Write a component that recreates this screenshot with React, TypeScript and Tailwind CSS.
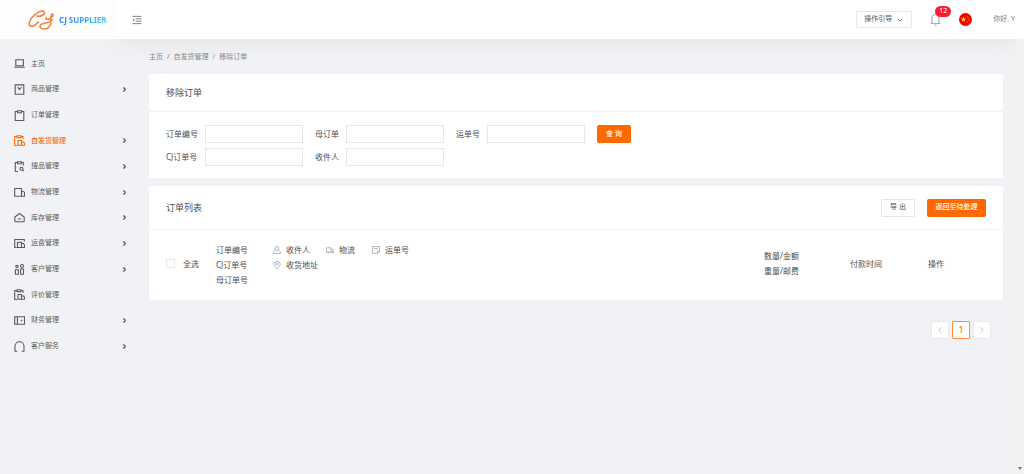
import { type ReactNode } from "react";
import { ChevronDown, ChevronLeft, ChevronRight } from "lucide-react";

type MenuItem = {
  label: string;
  icon: ReactNode;
  expandable?: boolean;
  active?: boolean;
};

const clipboard = (
  <>
    <path d="M3 1.5H1.2v9h8.6v-9H8" />
    <path d="M3.5.8h4v1.9h-4z" />
  </>
);

const clipboardBox = (
  <>
    <path d="M2.5 1.5H.7v9h2.5M7.500 1.500H9v2.500M3 .7h4v1.900H3z" />
    <path d="M4 5.500h3.500v4.700H4zM7.500 7h2.200l.8 1.500v1.700H7.500z" />
  </>
);

const menu: MenuItem[] = [
  { label: "主页", icon: <path d="M1.8 1.8h7.6v5.9H1.8zM.2 9.3h10.6" /> },
  { label: "商品管理", icon: <path d="M1.2.9h8.6v9.3H1.2zM3.5 3.2l2 2.2 2-2.2" />, expandable: true },
  { label: "订单管理", icon: clipboard },
  { label: "自发货管理", icon: clipboardBox, expandable: true, active: true },
  {
    label: "搜品管理",
    icon: (
      <>
        <path d="M3 1.5H1.3v9H4M7.5 1.5h1.8v3M3.5.8h3.8v1.9H3.5z" />
        <circle cx="7.5" cy="7.7" r="1.5" />
        <path d="M8.6 8.8l1 1.4" />
      </>
    ),
    expandable: true,
  },
  { label: "物流管理", icon: <path d="M.7 1.5h6.8v7.8H.7zM7.5 4.5h1.7q1.3 0 1.3 1.7v3.1h-3" />, expandable: true },
  { label: "库存管理", icon: <path d="M5.5 1.5L.8 5v4q0 .8.8.8h7.8q.8 0 .8-.8V5zM3.8 7h3.4" />, expandable: true },
  {
    label: "运费管理",
    icon: <path d="M2.7 9.5H.7v-8h9.6v2M3.5 4.2h4v5.3h-4zM7.5 5.5h1.8l1.2 1.500v2.500h-3" />,
    expandable: true,
  },
  {
    label: "客户管理",
    icon: (
      <>
        <circle cx="3" cy="2.6" r="1.2" />
        <circle cx="8" cy="2" r="1.5" />
        <path d="M1.4 5.8h3v4.4h-3zM6.6 5h2.9v5.2H6.6z" />
      </>
    ),
    expandable: true,
  },
  { label: "评价管理", icon: clipboardBox },
  { label: "财务管理", icon: <path d="M.7 1.8h9.8v7.4H.7zM3.4 1.8v7.4M7.5 4.7v1.6M6.7 5.5h1.6" />, expandable: true },
  { label: "客户服务", icon: <path d="M3.2 10.2H1V5.3a4.500 4.500 0 0 1 9 0v4.900H7.600" />, expandable: true },
];

function LineIcon({ children, className }: { children: ReactNode; className: string }) {
  return (
    <svg viewBox="0 0 11 11" fill="none" stroke="currentColor" className={className} aria-hidden="true">
      {children}
    </svg>
  );
}

function Logo() {
  return (
    <a href="#" className="z-10 flex w-[117px] items-center gap-[5px] bg-[#fdfdfd] pl-7">
      <svg viewBox="0 0 80 60" className="h-5 w-[26px] shrink-0" fill="none" stroke="#fb7a2c" strokeWidth="4.5" strokeLinecap="round" aria-hidden="true">
        <path d="M27 17C36 22 54 14 50 5C45-2 22 7 10 25C-1 42 3 52 14 49C21 47 27 42 32 36" />
        <path d="M56 22C53 32 69 29 76 18C80 10 72 9 71 18C70 34 74 50 58 56C44 60 34 54 38 46C43 38 58 43 75 30" />
      </svg>
      <span className="bg-gradient-to-r from-[#2d80f7] to-[#4cc4fb] bg-clip-text font-['Noto_Sans'] text-[8px] font-bold whitespace-nowrap text-transparent">
        CJ SUPPLIER
      </span>
    </a>
  );
}

function Header() {
  return (
    <header className="flex h-[39px] shrink-0">
      <Logo />
      <div className="flex flex-1 items-center bg-white pr-[9px] pl-[15px] shadow-[0_0_28px_rgba(30,35,45,0.07)]">
        <button type="button" aria-label="收起菜单" className="text-[#777777]">
          <LineIcon className="size-[10px]">
            <path d="M.5 1.5h10M4 4.2h6.5M4 6.8h6.5M.5 9.5h10" />
            <path d="M2.3 4L.6 5.5 2.3 7z" fill="currentColor" strokeWidth=".3" />
          </LineIcon>
        </button>
        <button type="button" className="ml-auto flex h-[17px] w-14 items-center justify-center gap-1 rounded-[1px] border border-[#e8e8e8] text-[#555555]">
          操作引导
          <ChevronDown className="size-2" />
        </button>
        <button type="button" aria-label="通知" className="relative ml-[18px] text-[#aaa9c8]">
          <svg viewBox="0 0 11 13" className="h-[13px] w-[11px]" fill="none" stroke="currentColor" strokeWidth="1.2" aria-hidden="true">
            <path d="M2 10V5a3.5 3.5 0 0 1 7 0v5M.5 10.5h10M4.5 12.2h2" />
          </svg>
          <span className="absolute -top-[7px] left-[5px] flex h-[11px] w-4 items-center justify-center rounded-full bg-[#fa1e2d] text-[7px] text-white">
            12
          </span>
        </button>
        <button type="button" aria-label="中文" className="ml-[18px]">
          <svg viewBox="0 0 26 26" className="size-[13px]" aria-hidden="true">
            <circle cx="13" cy="13" r="13" fill="#f50000" />
            <path d="M9 7l1.500 3.900 4.200.1-3.300 2.600 1.200 4.100L9 15.400l-3.600 2.300 1.200-4.100L3.300 11l4.200-.1z" fill="#ffd800" />
            <path d="M15.500 7q5 2 4.500 6t-5 6" fill="none" stroke="#ffa000" strokeWidth="1.800" strokeDasharray="2.500 1.800" />
          </svg>
        </button>
        <span className="ml-[21px] text-[#777777]">你好, Y</span>
      </div>
    </header>
  );
}

function Sidebar() {
  return (
    <nav className="w-[133px] shrink-0 pt-3">
      <ul className="grid h-[308px] grid-rows-12">
        {menu.map((item) => (
          <li key={item.label} className="flex">
            <a
              href="#"
              className={`flex flex-1 items-center gap-[6px] pr-[5px] pl-[14px] ${item.active ? "font-medium text-[#ff6a00]" : "text-[#5a5a5a]"}`}
            >
              <LineIcon className="size-[11px] stroke-[1.1]">{item.icon}</LineIcon>
              {item.label}
              {item.expandable && <ChevronRight className="ml-auto size-[7px] text-[#555555]" strokeWidth={4} />}
            </a>
          </li>
        ))}
      </ul>
    </nav>
  );
}

function Field({ id, label, wide }: { id: string; label: string; wide?: boolean }) {
  return (
    <div className="flex items-center">
      <label htmlFor={id} className={wide ? "w-[39px]" : "w-[31px]"}>
        {label}
      </label>
      <input id={id} type="text" className="h-[18px] w-[98px] border border-[#e6e6e6] bg-white px-1 outline-none" />
    </div>
  );
}

function SearchCard() {
  return (
    <section className="bg-white">
      <h2 className="flex h-[38px] items-center border-b border-[#f2f2f2] px-[17px] text-[9px]">移除订单</h2>
      <form className="flex flex-col gap-[5px] px-[17px] pt-[13px] pb-3 text-[8px]">
        <div className="flex gap-3">
          <Field id="orderNo" label="订单编号" wide />
          <Field id="parentOrder" label="母订单" />
          <Field id="trackingNo" label="运单号" />
          <button type="button" className="h-[18px] w-[34px] rounded-[2px] bg-[#ff6a00] text-[7px] font-medium text-white">
            查 询
          </button>
        </div>
        <div className="flex gap-3">
          <Field id="cjOrderNo" label="CJ订单号" wide />
          <Field id="recipient" label="收件人" />
        </div>
      </form>
    </section>
  );
}

function HeadLabel({ label, children }: { label: string; children: ReactNode }) {
  return (
    <span className="flex items-center gap-[5px]">
      <LineIcon className="size-[8px] text-[#999999]">{children}</LineIcon>
      {label}
    </span>
  );
}

function OrderCard() {
  return (
    <section className="mt-2 bg-white">
      <div className="flex h-[44px] items-center border-b border-[#f2f2f2] px-[17px]">
        <h2 className="text-[9px]">订单列表</h2>
        <button type="button" className="ml-auto h-[18px] w-[34px] rounded-[1px] border border-[#e8e8e8]">
          导 出
        </button>
        <button type="button" className="ml-3 h-[18px] w-[59px] rounded-[2px] bg-[#ff6a00] font-medium text-white">
          返回至待处理
        </button>
      </div>
      <table className="w-full table-fixed text-left text-[8px] leading-[15px]">
        <thead>
          <tr className="h-[70px] [&>th]:font-normal">
            <th className="w-[67px] pb-1 pl-[17px]">
              <label className="flex items-center gap-2">
                <input type="checkbox" className="size-[9px] appearance-none border border-[#e6e6e6] bg-white" />
                全选
              </label>
            </th>
            <th className="w-[57px] pb-[2px]">
              订单编号
              <br />
              CJ订单号
              <br />
              母订单号
            </th>
            <th className="align-top">
              <div className="mt-3 grid grid-cols-[53px_46px_1fr]">
                <HeadLabel label="收件人">
                  <circle cx="5.5" cy="3.2" r="2.7" />
                  <path d="M3.7 5.3C1.6 6.4.7 8 .6 10.4h9.8C10.3 8 9.4 6.4 7.3 5.3" />
                </HeadLabel>
                <HeadLabel label="物流">
                  <path d="M2 8.5H.5V2.5H7v6H4.5M7 4.5h2.3l1.2 2v2H9.6" />
                  <circle cx="3.2" cy="8.7" r="1.1" />
                  <circle cx="8.4" cy="8.7" r="1.1" />
                </HeadLabel>
                <HeadLabel label="运单号">
                  <path d="M.7.7h9.6v6.8L7.5 10.4H.7zM7.5 10.4V7.5h2.8M3 3.5h5" />
                </HeadLabel>
                <HeadLabel label="收货地址">
                  <path d="M5.5 10.7C2.5 8 1 6.2 1 4.5a4.5 4 0 0 1 9 0c0 1.7-1.5 3.5-4.5 6.2z" />
                  <circle cx="5.5" cy="4.5" r="1.5" />
                </HeadLabel>
              </div>
            </th>
            <th className="w-[86px] pb-1">
              数量/金额
              <br />
              重量/邮费
            </th>
            <th className="w-[78px] pb-1">付款时间</th>
            <th className="w-[75px] pb-1">操作</th>
          </tr>
        </thead>
      </table>
    </section>
  );
}

function Pagination() {
  return (
    <nav aria-label="分页" className="mt-[21px] mr-[12px] flex justify-end gap-[3px]">
      <button type="button" aria-label="上一页" className="flex size-[18px] items-center justify-center rounded-[1px] border border-[#e8e8e8] bg-white text-[#bbbbbb]">
        <ChevronLeft className="size-[10px]" />
      </button>
      <button type="button" className="size-[18px] rounded-[1px] border border-[#ff8a3c] bg-white text-[8px] leading-[16px] font-medium text-[#ff6a00]">
        1
      </button>
      <button type="button" aria-label="下一页" className="flex size-[18px] items-center justify-center rounded-[1px] border border-[#e8e8e8] bg-white text-[#bbbbbb]">
        <ChevronRight className="size-[10px]" />
      </button>
    </nav>
  );
}

export default function App() {
  return (
    <div className="flex min-h-screen flex-col bg-[#f0f2f5] font-['Noto_Sans','Noto_Sans_CJK_SC',sans-serif] text-[7px] text-[#4d4d4d]">
      <Header />
      <div className="flex flex-1">
        <Sidebar />
        <main className="min-w-0 flex-1 pr-[13px] pl-4">
          <nav aria-label="面包屑" className="flex h-[35px] items-center gap-1 pt-[2px] text-[#888888]">
            <a href="#">主页</a>
            <span>/</span>
            <a href="#">自发货管理</a>
            <span>/</span>
            <span>移除订单</span>
          </nav>
          <SearchCard />
          <OrderCard />
          <Pagination />
        </main>
        <div className="flex w-2 flex-col items-center justify-end bg-[#f1f1f1] pb-1">
          <svg viewBox="0 0 4 3" className="h-[3px] w-1" fill="#777777" aria-hidden="true">
            <path d="M0 0h4L2 3z" />
          </svg>
        </div>
      </div>
    </div>
  );
}
